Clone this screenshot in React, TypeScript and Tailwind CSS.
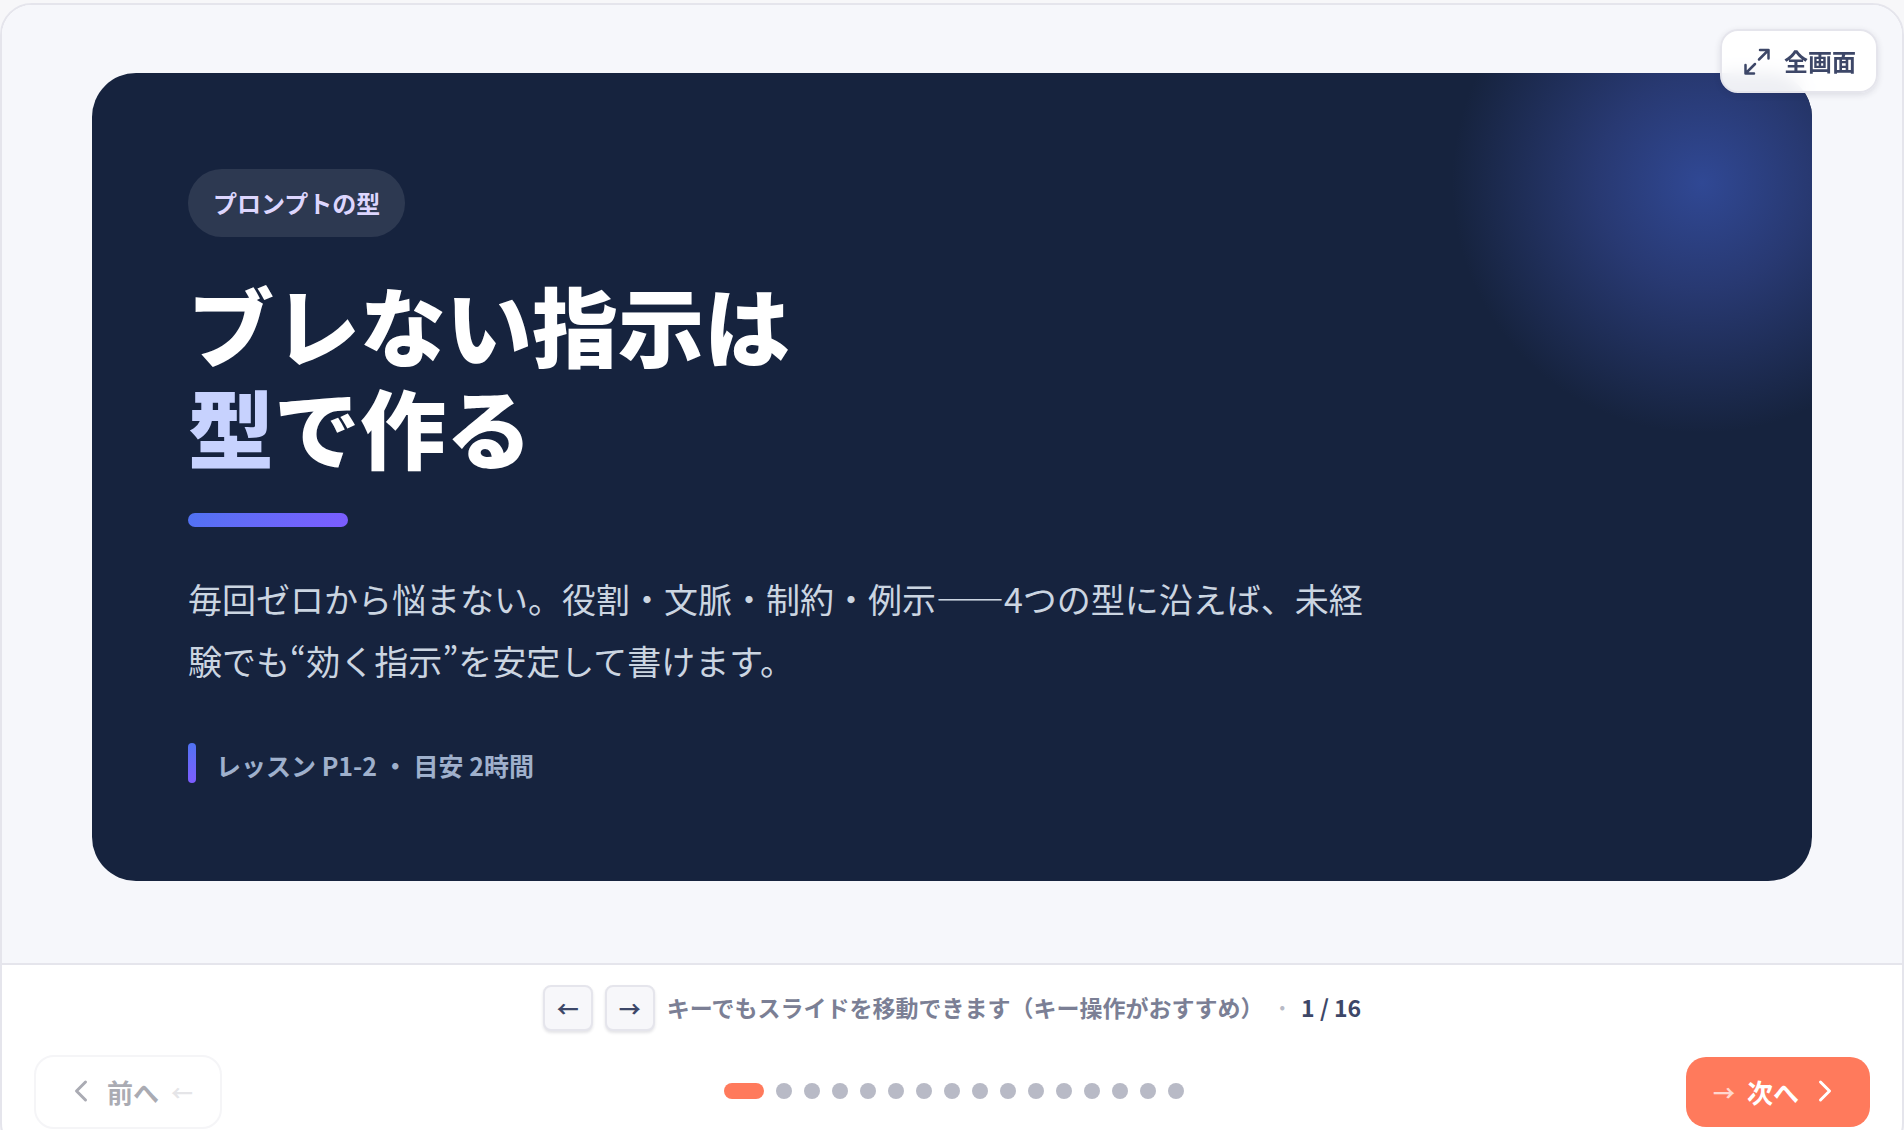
import { ChevronLeft, ChevronRight } from "lucide-react";

const SLIDE_COUNT = 16;

function ExpandIcon() {
  return (
    <svg
      viewBox="0 0 30 30"
      className="size-[30px]"
      fill="none"
      stroke="currentColor"
      strokeWidth="2.5"
      strokeLinecap="round"
      strokeLinejoin="round"
      aria-hidden="true"
    >
      <path d="M18 4h8.500V12.500M26.500 4 17 13.500M12 27.500H3.500v-8.500M3.500 27.500 13 18" />
    </svg>
  );
}

function KeyCap({ children }: { children: string }) {
  return (
    <kbd className="flex h-[46px] w-[50px] items-center justify-center rounded-lg border-2 border-[#e5e5ec] bg-[#f7f7fa] pb-0.5 font-[inherit] text-[22px] leading-none font-bold text-[#3d4768] shadow-[0_2px_3px_rgba(30,30,60,0.12)]">
      {children}
    </kbd>
  );
}

function Slide() {
  return (
    <article className="relative overflow-hidden rounded-[44px] bg-[#16233e] px-24 pt-24 pb-[94px]">
      <div
        aria-hidden="true"
        className="absolute -top-[140px] -right-[140px] size-[500px] rounded-full bg-[radial-gradient(closest-side,#304894_0%,#283972_42%,#16233e_100%)]"
      />
      <div className="relative flex flex-col items-start">
        <span className="flex h-[68px] items-center rounded-full bg-white/10 px-[25px] text-2xl font-bold text-[#ddd6fe]">
          プロンプトの型
        </span>
        <h1 className="mt-9 text-[86px] leading-[102px] font-black text-white">
          ブレない指示は
          <br />
          <span className="text-[#c7d2fe]">型</span>で作る
        </h1>
        <div className="mt-9 h-3.5 w-40 rounded-full bg-linear-135 from-[#4f72f2] to-[#7c5cff]" />
        <p className="mt-[41px] max-w-[1190px] text-[34px] leading-[62px] text-[#cbd5e1]">
          毎回ゼロから悩まない。役割・文脈・制約・例示——4つの型に沿えば、未経験でも“効く指示”を安定して書けます。
        </p>
        <div className="mt-[51px] flex items-start gap-5">
          <span className="h-10 w-2 rounded-full bg-linear-to-b from-[#4f72f2] to-[#7c5cff]" />
          <span className="text-[25px] leading-[44px] font-semibold text-[#9fb0cc]">レッスン P1-2 ・ 目安 2時間</span>
        </div>
      </div>
    </article>
  );
}

export default function App() {
  return (
    <div
      lang="ja"
      className="h-screen overflow-hidden bg-[#f7f7f9] pt-[3px] font-['Noto_Sans_CJK_JP',sans-serif]"
    >
      <main className="relative overflow-hidden rounded-[32px] border-2 border-[#e5e5ec] bg-white">
        <section className="border-b-2 border-[#e5e5ec] bg-[#f6f7fb] px-[90px] pt-[68px] pb-[82px]">
          <Slide />
        </section>
        <button
          type="button"
          className="absolute top-6 right-6 flex h-16 items-center gap-3 rounded-[18px] border-2 border-[#e5e5ec] bg-white/92 px-5 text-2xl font-bold text-[#3d4768] shadow-[0_2px_6px_rgba(30,30,60,0.12)] backdrop-blur-sm"
        >
          <ExpandIcon />
          全画面
        </button>
        <footer className="px-8 pt-5 pb-6">
          <div className="flex items-start justify-center gap-3">
            <KeyCap>←</KeyCap>
            <KeyCap>→</KeyCap>
            <span className="text-[23px] leading-[44px] font-semibold text-[#7b7f95]">
              キーでもスライドを移動できます（キー操作がおすすめ）
            </span>
            <span className="text-[23px] leading-[44px] font-semibold text-[#b8bac6]">·</span>
            <span className="text-[23px] leading-[44px] font-bold text-[#3d4768]">1 / 16</span>
          </div>
          <nav className="mt-6 flex items-center justify-between">
            <button
              type="button"
              disabled
              className="flex h-[74px] w-[188px] items-center justify-center rounded-[20px] border-2 border-[#e5e5ec] pb-0.5 text-[26px] font-bold text-[#2b2d42] opacity-40"
            >
              <ChevronLeft className="size-9" />
              <span className="ml-2">前へ</span>
              <span className="ml-3 text-[22px] opacity-30">←</span>
            </button>
            <div className="flex gap-3 pb-0.5">
              {Array.from({ length: SLIDE_COUNT }, (_, i) => (
                <button
                  key={i}
                  type="button"
                  aria-label={`スライド ${i + 1}`}
                  className={i === 0 ? "h-4 w-10 rounded-full bg-[#ff7a5c]" : "size-4 rounded-full bg-[#b8bac6]"}
                />
              ))}
            </div>
            <button
              type="button"
              className="flex h-[70px] w-[184px] items-center justify-center rounded-[20px] bg-[#ff7a5c] pb-0.5 text-[26px] font-bold text-white"
            >
              <span className="text-[22px] opacity-70">→</span>
              <span className="ml-3">次へ</span>
              <ChevronRight className="ml-2 size-9" />
            </button>
          </nav>
        </footer>
      </main>
    </div>
  );
}
